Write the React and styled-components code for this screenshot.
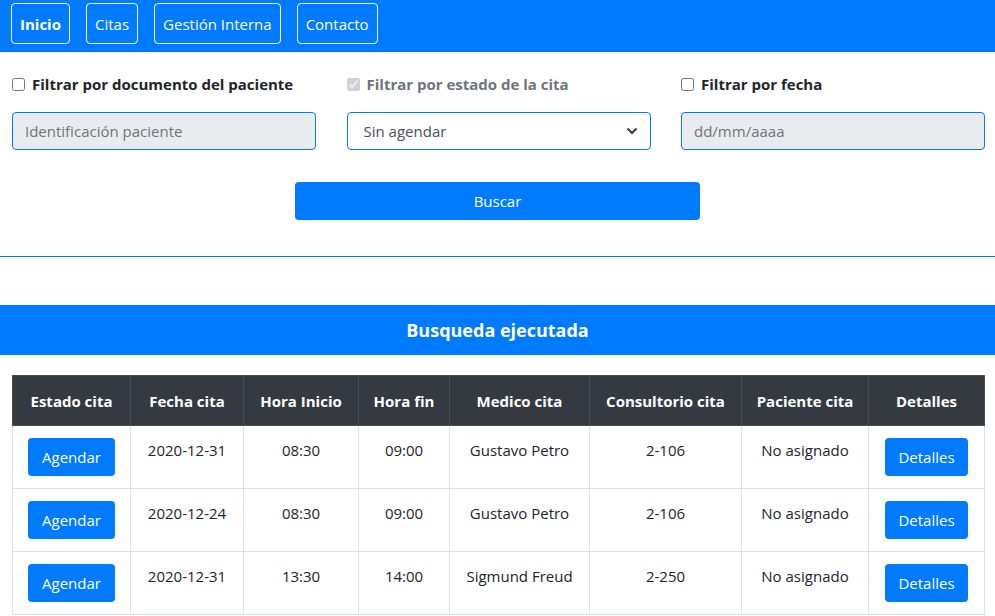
import styled, { createGlobalStyle } from "styled-components";

const GlobalStyle = createGlobalStyle`
    body {
        margin: 0;
        font-family: "Open Sans", "Noto Sans", sans-serif;
        font-size: 15px;
        color: #212529;
        background: #fff;
    }
    * { box-sizing: border-box; }
`

const NavBar = styled.nav`
    background-color: #007bff;
    height: 52px;
    display: flex;
    align-items: flex-start;
    gap: 16px;
    padding: 3px 11px 0;
`
const NavButton = styled.button`
    font-family: inherit;
    font-size: 15px;
    font-weight: ${(props) => (props.active ? "bold" : "normal")};
    color: white;
    background: transparent;
    border: 1px solid white;
    border-radius: 4px;
    height: 41px;
    padding: 0 8px;
`
const FilterGrid = styled.div`
    display: grid;
    grid-template-columns: repeat(3, 304px);
    column-gap: 30.5px;
    row-gap: 17px;
    padding: 21px 12px 0;
`
const CheckLabel = styled.label`
    display: flex;
    align-items: center;
    gap: 7px;
    font-weight: bold;
    font-size: 15px;
    height: 22px;
    color: ${(props) => (props.disabled ? "#6c757d" : "#212529")};
    & input {
        margin: 0;
        width: 13px;
        height: 13px;
    }
`
const Field = styled.input`
    font-family: inherit;
    font-size: 15px;
    height: 38px;
    width: 100%;
    padding: 6px 12px;
    border: 1px solid #007bff;
    border-radius: 4px;
    background-color: #e9ecef;
    color: #495057;
    &::placeholder { color: #6c757d; }
`
const Select = styled.div`
    height: 38px;
    padding: 6px 12px 6px 16px;
    border: 1px solid #007bff;
    border-radius: 4px;
    display: flex;
    align-items: center;
    justify-content: space-between;
    color: #495057;
`
const Buscar = styled.button`
    display: block;
    margin: 32px auto 0;
    width: 405px;
    height: 38px;
    font-family: inherit;
    font-size: 15px;
    color: white;
    background: #007bff;
    border: none;
    border-radius: 4px;
`
const Divider = styled.hr`
    margin: 36px 0 0;
    border: none;
    border-top: 1px solid #007bff;
`
const Banner = styled.div`
    margin-top: 48px;
    height: 50px;
    background: #007bff;
    color: white;
    font-size: 18px;
    font-weight: bold;
    display: flex;
    align-items: center;
    justify-content: center;
`
const Table = styled.table`
    margin: 20px 12px 0;
    width: 972px;
    border-collapse: collapse;
    table-layout: fixed;
    text-align: center;
    & th {
        background: #343a40;
        color: white;
        font-weight: bold;
        border: 1px solid #454d55;
        height: 50px;
        padding: 0 4px;
    }
    & td {
        border: 1px solid #dee2e6;
        vertical-align: top;
        padding: 12px 4px;
        line-height: 24px;
    }
`
const ActionButton = styled.button`
    display: inline-block;
    vertical-align: top;
    font-family: inherit;
    font-size: 15px;
    color: white;
    background: #007bff;
    border: none;
    border-radius: 4px;
    height: 38px;
    padding: 0 ${(props) => props.pad}px;
`

const widths = [118, 113, 115, 91, 140, 152, 127, 116];
const headers = ["Estado cita", "Fecha cita", "Hora Inicio", "Hora fin", "Medico cita", "Consultorio cita", "Paciente cita", "Detalles"];
const rows = [
    { fecha: "2020-12-31", inicio: "08:30", fin: "09:00", medico: "Gustavo Petro", consultorio: "2-106" },
    { fecha: "2020-12-24", inicio: "08:30", fin: "09:00", medico: "Gustavo Petro", consultorio: "2-106" },
    { fecha: "2020-12-31", inicio: "13:30", fin: "14:00", medico: "Sigmund Freud", consultorio: "2-250" },
];

const Chevron = () => (
    <svg width="12" height="8" viewBox="0 0 12 8">
        <path d="M1.5 1.5 L6 6 L10.5 1.5" fill="none" stroke="#343a40" strokeWidth="2" />
    </svg>
)

const App = () => {
    return (
        <>
            <GlobalStyle />
            <NavBar>
                <NavButton active>Inicio</NavButton>
                <NavButton>Citas</NavButton>
                <NavButton>Gestión Interna</NavButton>
                <NavButton>Contacto</NavButton>
            </NavBar>
            <FilterGrid>
                <CheckLabel><input type="checkbox" />Filtrar por documento del paciente</CheckLabel>
                <CheckLabel disabled><input type="checkbox" checked disabled readOnly />Filtrar por estado de la cita</CheckLabel>
                <CheckLabel><input type="checkbox" />Filtrar por fecha</CheckLabel>
                <Field placeholder="Identificación paciente" readOnly />
                <Select>Sin agendar<Chevron /></Select>
                <Field placeholder="dd/mm/aaaa" readOnly />
            </FilterGrid>
            <Buscar>Buscar</Buscar>
            <Divider />
            <Banner>Busqueda ejecutada</Banner>
            <Table>
                <colgroup>
                    {widths.map((w, i) => <col key={i} style={{ width: w }} />)}
                </colgroup>
                <thead>
                    <tr>{headers.map((h) => <th key={h}>{h}</th>)}</tr>
                </thead>
                <tbody>
                    {rows.map((r, i) => (
                        <tr key={i}>
                            <td><ActionButton pad={14}>Agendar</ActionButton></td>
                            <td>{r.fecha}</td>
                            <td>{r.inicio}</td>
                            <td>{r.fin}</td>
                            <td>{r.medico}</td>
                            <td>{r.consultorio}</td>
                            <td>No asignado</td>
                            <td><ActionButton pad={13}>Detalles</ActionButton></td>
                        </tr>
                    ))}
                </tbody>
            </Table>
        </>
    )
}

export default App;
